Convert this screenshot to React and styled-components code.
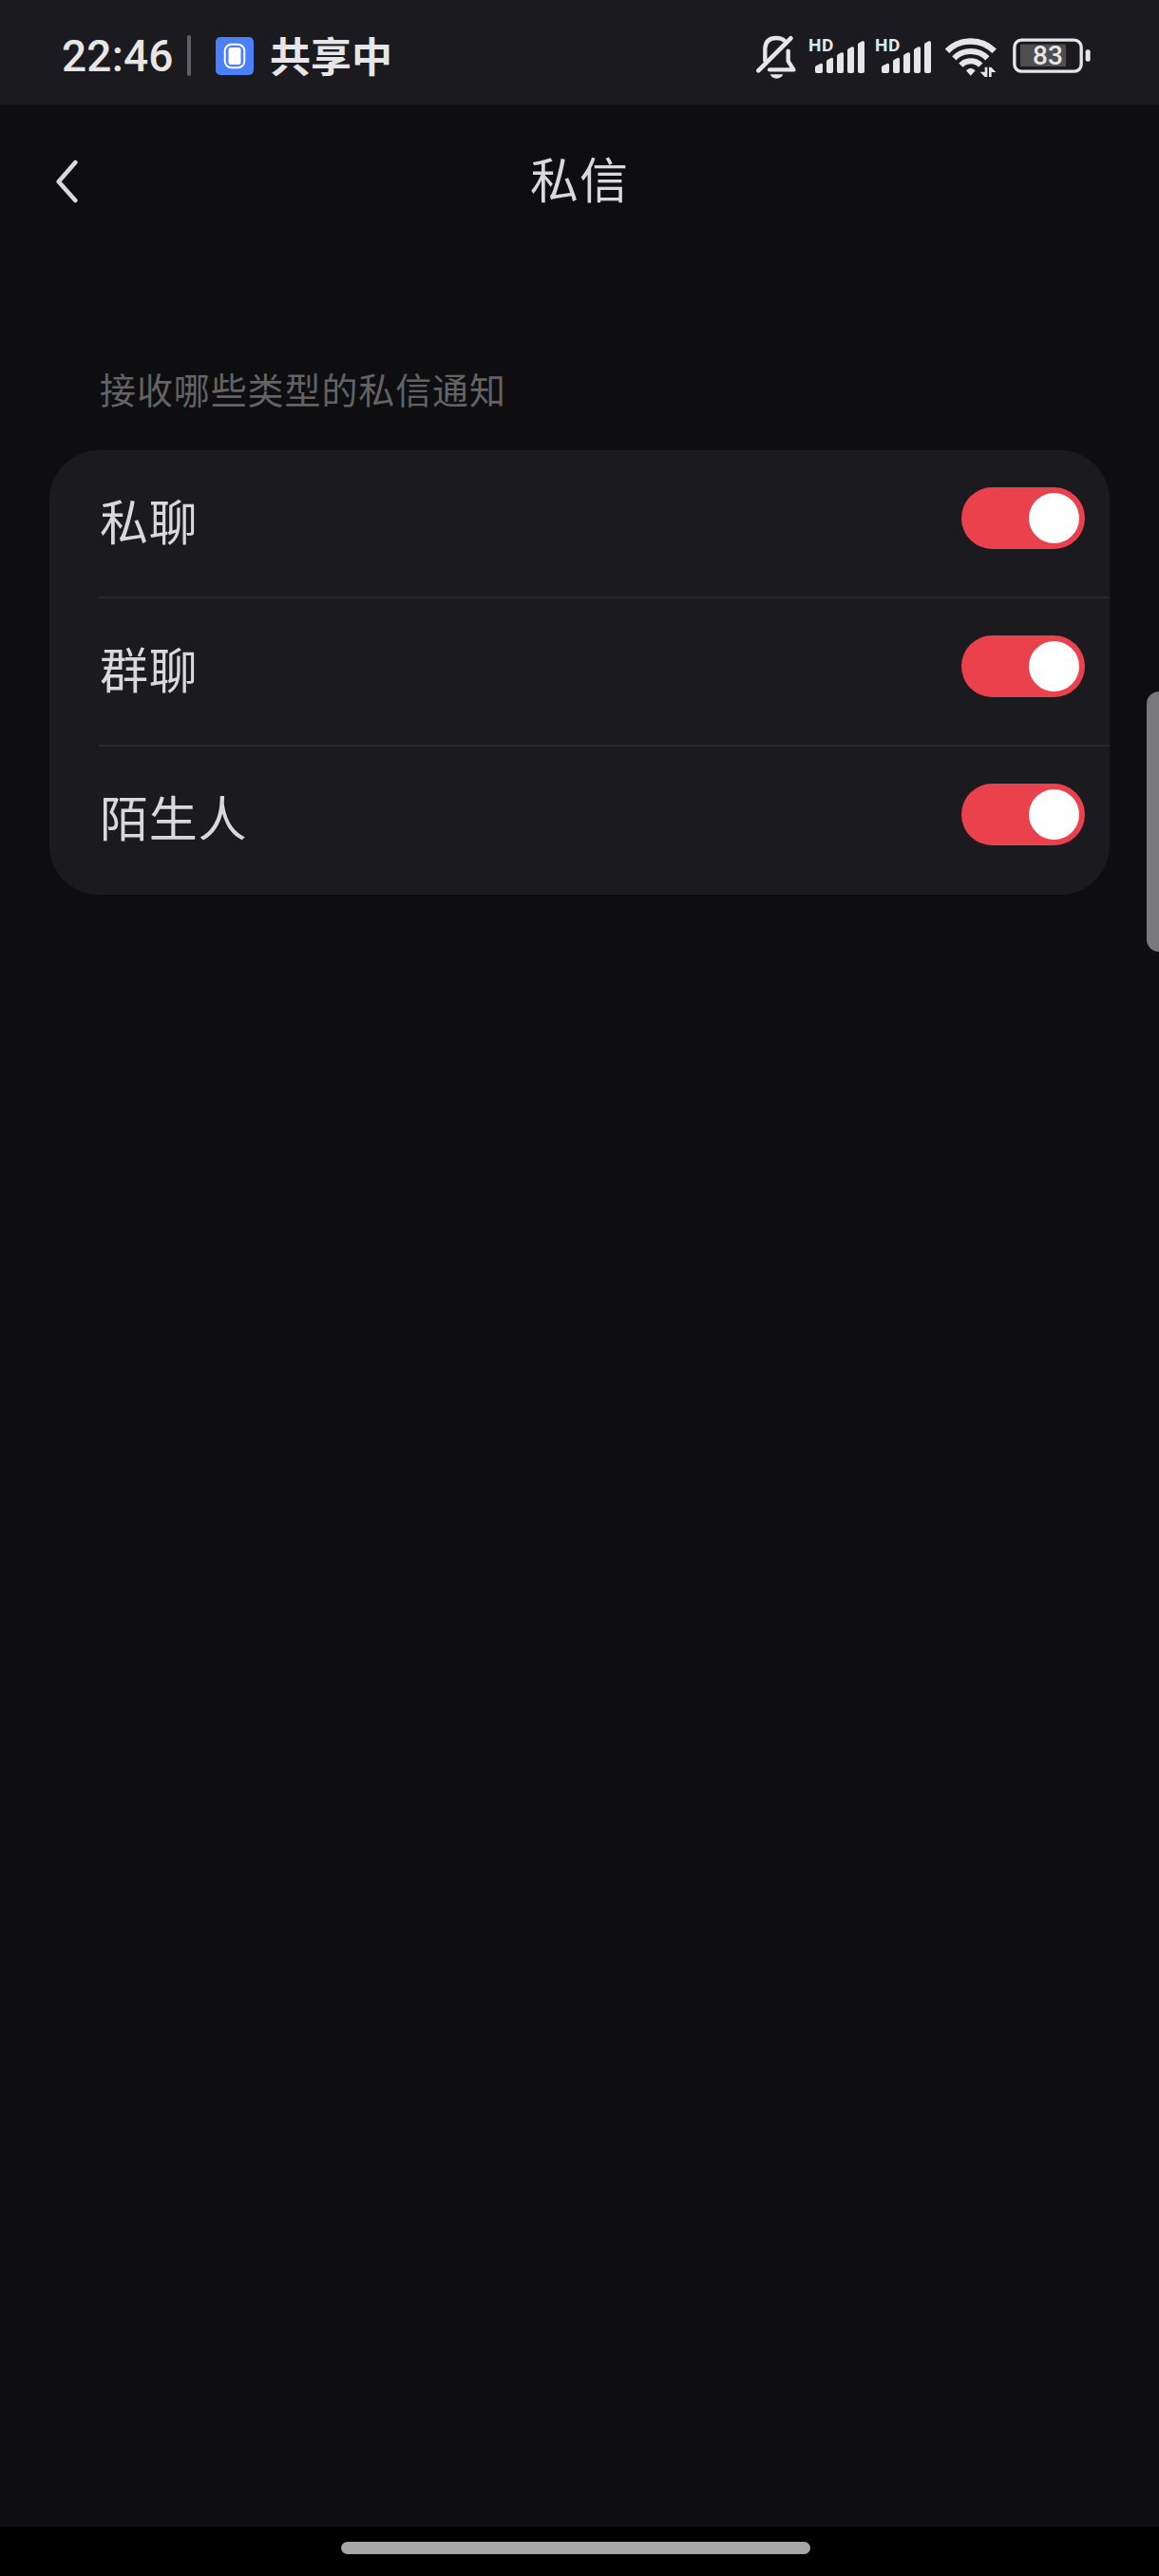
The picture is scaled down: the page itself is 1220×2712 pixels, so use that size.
import React, { useState } from "react";
import styled, { createGlobalStyle } from "styled-components";

const GlobalStyle = createGlobalStyle`
  * { box-sizing: border-box; }
  html, body { margin: 0; padding: 0; background: #0e0e10; }
  body { font-family: Roboto, "Noto Sans CJK SC", sans-serif; }
  button { border: 0; padding: 0; background: none; font: inherit; color: inherit; }
`;

const Screen = styled.div`
  display: flex;
  flex-direction: column;
  width: 1220px;
  height: 2712px;
  background: #0e0e10;
  overflow: hidden;
  position: relative;
`;

const StatusBar = styled.header`
  flex: none;
  display: flex;
  justify-content: space-between;
  align-items: flex-start;
  height: 110px;
  padding: 37px 72px 0 65px;
  background: #1b1b1f;
  color: #e6e6e8;
`;

const StatusLeft = styled.div`
  display: flex;
  align-items: center;
  height: 43px;
`;

const StatusRight = styled.div`
  display: flex;
  align-items: flex-start;
  height: 47px;
`;

const Clock = styled.span`
  width: 132px;
  padding-top: 1px;
  font-size: 46px;
  font-weight: 500;
  line-height: 45px;
  letter-spacing: 0.2px;
  white-space: nowrap;
`;

const Separator = styled.span`
  width: 4px;
  height: 43px;
  border-radius: 2px;
  background: #616165;
`;

const ShareIcon = styled.svg`
  width: 40px;
  height: 40px;
  margin: 0 17px 0 26px;
`;

const ShareText = styled.span`
  padding-bottom: 3px;
  font-family: "Noto Sans CJK SC", sans-serif;
  font-size: 43px;
  font-weight: 700;
  line-height: 43px;
`;

const BellIcon = styled.svg`
  width: 42px;
  height: 47px;
  margin-right: 14px;
`;

const Signal = styled.div`
  position: relative;
  width: 58px;
  height: 37px;
  margin: 3px 12px 0 0;
`;

const SignalBars = styled.svg`
  display: block;
  width: 58px;
  height: 37px;
`;

const SignalTag = styled.span`
  position: absolute;
  left: -1px;
  top: -2px;
  font-size: 19px;
  line-height: 20px;
  font-weight: 700;
  letter-spacing: 0.5px;
`;

const WifiIcon = styled.svg`
  width: 54px;
  height: 41px;
  margin: 3px 17px 0 3px;
`;

const Battery = styled.div`
  position: relative;
  width: 82px;
  height: 37px;
  margin-top: 3px;
`;

const BatteryShell = styled.svg`
  display: block;
  width: 82px;
  height: 37px;
`;

const BatteryText = styled.span`
  position: absolute;
  left: 0;
  top: 0;
  width: 74px;
  font-size: 28px;
  line-height: 38px;
  font-weight: 500;
  text-align: center;
`;

const NavBar = styled.nav`
  flex: none;
  display: grid;
  grid-template-columns: 104px 1fr 104px;
  align-items: center;
  height: 160px;
`;

const BackButton = styled.button`
  display: flex;
  padding-left: 57px;
`;

const Title = styled.h1`
  margin: 0;
  padding-bottom: 7px;
  font-family: "Noto Sans CJK SC", sans-serif;
  font-size: 51px;
  font-weight: 400;
  line-height: 60px;
  letter-spacing: 1px;
  text-align: center;
  color: #d9d9db;
`;

const Content = styled.main`
  flex: 1;
  display: flex;
  flex-direction: column;
  padding: 111px 52px 0;
`;

const SectionLabel = styled.h2`
  margin: 0 0 37px;
  padding-left: 53px;
  font-family: "Noto Sans CJK SC", sans-serif;
  font-size: 38px;
  font-weight: 400;
  line-height: 56px;
  letter-spacing: 0.9px;
  color: #636365;
`;

const Card = styled.section`
  display: flex;
  flex-direction: column;
  border-radius: 52px;
  background: #1b1b1f;
  overflow: hidden;
`;

const Row = styled.div`
  display: flex;
  justify-content: space-between;
  align-items: flex-start;
  height: 156px;
  margin-left: 52px;
  padding: 39px 26px 0 0;
  border-bottom: ${(p) => (p.$last ? "0" : "2px solid #29292d")};
`;

const RowLabel = styled.span`
  padding-left: 1px;
  font-family: "Noto Sans CJK SC", sans-serif;
  font-size: 51px;
  line-height: 68px;
  letter-spacing: 0.8px;
  color: #d9d9db;
`;

const Switch = styled.button`
  display: flex;
  justify-content: ${(p) => (p.$on ? "flex-end" : "flex-start")};
  align-items: center;
  width: 130px;
  height: 65px;
  padding: 0 6px;
  border-radius: 33px;
  background: ${(p) => (p.$on ? "#eb414d" : "#3a3a3f")};
`;

const Knob = styled.span`
  width: 53px;
  height: 53px;
  border-radius: 50%;
  background: #fff;
`;

const EdgeHandle = styled.div`
  position: absolute;
  right: 0;
  top: 728px;
  width: 13px;
  height: 274px;
  border-radius: 13px 0 0 13px;
  background: #79797b;
`;

const GestureBar = styled.footer`
  flex: none;
  display: flex;
  height: 52px;
  padding: 16px 0 0 359px;
  background: #000;
`;

const GesturePill = styled.span`
  width: 494px;
  height: 13px;
  border-radius: 7px;
  background: #a6a6a6;
`;

function SignalMeter() {
  return (
    <Signal>
      <SignalBars viewBox="216 60 174 111" fill="currentColor">
        <path d="M234 153q0-3 3-5l14-7q7-2 7 4v20q0 6-6 6h-12q-6 0-6-6z" />
        <path d="M270 134q0-3 3-5l11-6q7-2 7 4v38q0 6-6 6h-9q-6 0-6-6z" />
        <path d="M303 117q0-3 3-5l11-6q7-2 7 4v55q0 6-6 6h-9q-6 0-6-6z" />
        <path d="M336 99q0-3 3-5l11-6q7-2 7 4v73q0 6-6 6h-9q-6 0-6-6z" />
        <path d="M369 81q0-3 3-5l11-6q7-2 7 4v91q0 6-6 6h-9q-6 0-6-6z" />
      </SignalBars>
      <SignalTag>HD</SignalTag>
    </Signal>
  );
}

function Status() {
  return (
    <StatusBar>
      <StatusLeft>
        <Clock>22:46</Clock>
        <Separator />
        <ShareIcon viewBox="0 0 40 40">
          <rect width="40" height="40" rx="5" fill="#4a80fa" />
          <rect x="9.7" y="7.7" width="20.6" height="24.6" rx="7" fill="none" stroke="#fff" strokeWidth="2" />
          <rect x="13.5" y="11" width="13" height="18" rx="2.5" fill="#fff" />
        </ShareIcon>
        <ShareText>共享中</ShareText>
      </StatusLeft>
      <StatusRight>
        <BellIcon viewBox="48 50 126 141" fill="none" stroke="currentColor" strokeWidth="13" strokeLinecap="round" strokeLinejoin="round">
          <path d="M76 131V92Q78 59 112 59Q128 59 138 68" />
          <path d="M149 100V132L166 159H90" />
          <path d="M55 162L157 60" strokeWidth="14" />
          <path d="M92 174H133Q127 187 112 187Q98 187 92 174Z" fill="currentColor" stroke="none" />
        </BellIcon>
        <SignalMeter />
        <SignalMeter />
        <WifiIcon viewBox="75 58 162 123" fill="none" stroke="currentColor">
          <path d="M81 99A106 106 0 0 1 230 99" strokeWidth="19" />
          <path d="M103 122A74 74 0 0 1 208 122" strokeWidth="18" />
          <path d="M124 144A44 44 0 0 1 187 144" strokeWidth="18" />
          <path d="M141 161Q155 145 170 161L155 177Z" fill="currentColor" stroke="none" />
          <path d="M200 150H208V181H200L185 165H200ZM213 181V150H220L235 166H221V181Z" fill="currentColor" stroke="none" />
        </WifiIcon>
        <Battery>
          <BatteryShell viewBox="288 61 246 111">
            <rect x="312" y="81" width="144" height="70" fill="#4e4e51" />
            <rect x="293.5" y="67.5" width="211" height="99" rx="22" fill="none" stroke="currentColor" strokeWidth="10" />
            <rect x="518" y="98" width="15" height="37" rx="6" fill="currentColor" />
          </BatteryShell>
          <BatteryText>83</BatteryText>
        </Battery>
      </StatusRight>
    </StatusBar>
  );
}

function NotificationRow({ label, last }) {
  const [on, setOn] = useState(true);
  return (
    <Row $last={last}>
      <RowLabel>{label}</RowLabel>
      <Switch $on={on} role="switch" aria-checked={on} aria-label={label} onClick={() => setOn(!on)}>
        <Knob />
      </Switch>
    </Row>
  );
}

const types = ["私聊", "群聊", "陌生人"];

export default function App() {
  return (
    <>
      <GlobalStyle />
      <Screen>
        <Status />
        <NavBar>
          <BackButton aria-label="返回">
            <svg width="27" height="48" viewBox="0 0 27 48" fill="none" stroke="#d9d9db" strokeWidth="4.6" strokeLinecap="round" strokeLinejoin="round">
              <path d="M22.3 5L4.7 25.3L22.3 45" />
            </svg>
          </BackButton>
          <Title>私信</Title>
        </NavBar>
        <Content>
          <SectionLabel>接收哪些类型的私信通知</SectionLabel>
          <Card>
            {types.map((label, i) => (
              <NotificationRow key={label} label={label} last={i === types.length - 1} />
            ))}
          </Card>
        </Content>
        <GestureBar>
          <GesturePill />
        </GestureBar>
        <EdgeHandle />
      </Screen>
    </>
  );
}
